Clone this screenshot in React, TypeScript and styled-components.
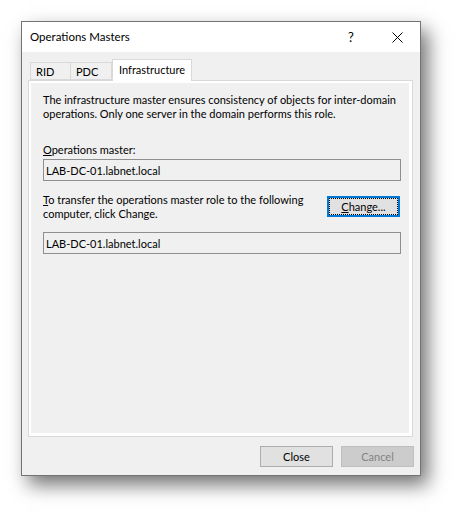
import React from 'react'
import styled, { createGlobalStyle } from 'styled-components'

const GlobalStyle = createGlobalStyle`
  html, body {
    margin: 0;
    padding: 0;
    background: #ffffff;
  }
  body {
    font-family: Lato, 'Liberation Sans', Arial, sans-serif;
    font-size: 11px;
    color: #000000;
  }
`

const Stage = styled.div`
  padding: 21px 0 0 21px;
  width: 463px;
  height: 518px;
  box-sizing: border-box;
`

const Window = styled.div`
  width: 400px;
  height: 455px;
  box-sizing: border-box;
  border: 1px solid #737373;
  background: #f0f0f0;
  display: flex;
  flex-direction: column;
  box-shadow: 7px 9px 18px rgba(0, 0, 0, 0.55);
`

const TitleBar = styled.div`
  height: 30px;
  background: #ffffff;
  display: flex;
  align-items: center;
  padding-left: 8px;
`

const Title = styled.div`
  flex: 1;
  font-size: 11.5px;
  margin-top: -1px;
`

const TitleButton = styled.div`
  width: 46px;
  height: 30px;
  display: flex;
  align-items: center;
  justify-content: center;
  font-size: 13px;
`

const Body = styled.div`
  flex: 1;
  display: flex;
  flex-direction: column;
  padding: 7px 7px 0 6px;
`

const TabStrip = styled.div`
  display: flex;
  align-items: flex-end;
  padding-left: 2px;
  height: 21px;
  position: relative;
  z-index: 1;
`

const Tab = styled.div<{ $active?: boolean }>`
  box-sizing: border-box;
  height: ${(p) => (p.$active ? '22px' : '18px')};
  margin-bottom: ${(p) => (p.$active ? '-1px' : '0')};
  padding: ${(p) => (p.$active ? '0 6px 3px 6px' : '0 5px 0 5px')};
  border: 1px solid #d9d9d9;
  border-bottom: ${(p) => (p.$active ? 'none' : '1px solid #d9d9d9')};
  border-left: ${(p) => (p.$active ? '1px solid #d9d9d9' : 'none')};
  &:first-child {
    border-left: 1px solid #d9d9d9;
  }
  background: ${(p) => (p.$active ? '#ffffff' : '#f0f0f0')};
  display: flex;
  align-items: center;
  font-size: 11px;
  min-width: ${(p) => (p.$active ? '0' : '41px')};
`

const Panel = styled.div`
  box-sizing: border-box;
  width: 385px;
  height: 357px;
  border: 1px solid #d9d9d9;
  background: #ffffff;
  padding: 2px;
  display: flex;
`

const Page = styled.div`
  flex: 1;
  min-width: 0;
  overflow: hidden;
  background: #f0f0f0;
  margin-right: 1px;
  margin-bottom: 1px;
  padding: 10px 8px 0 12px;
  display: flex;
  flex-direction: column;
`

const Paragraph = styled.p`
  margin: 0;
  line-height: 13.5px;
  white-space: nowrap;
`

const Label = styled.div`
  margin-top: 23px;
  line-height: 14px;
`

const TextBox = styled.div`
  box-sizing: border-box;
  height: 22px;
  border: 1px solid #8f8f8f;
  background: #f0f0f0;
  display: flex;
  align-items: center;
  padding-left: 2px;
  margin-top: 2px;
`

const TransferRow = styled.div`
  display: flex;
  align-items: flex-start;
  justify-content: space-between;
  margin-top: 12px;
  margin-bottom: 10px;
`

const TransferText = styled.div`
  line-height: 13.5px;
  white-space: nowrap;
`

const Button = styled.button<{ $focused?: boolean; $disabled?: boolean }>`
  box-sizing: border-box;
  width: 73px;
  height: 21px;
  font-family: inherit;
  font-size: 11px;
  border: ${(p) =>
    p.$focused
      ? '2px solid #0078d7'
      : p.$disabled
        ? '1px solid #bfbfbf'
        : '1px solid #adadad'};
  background: ${(p) => (p.$disabled ? '#cccccc' : '#e1e1e1')};
  color: ${(p) => (p.$disabled ? '#838383' : '#000000')};
  padding: 0;
  display: flex;
  align-items: center;
  justify-content: center;
  position: relative;
  ${(p) =>
    p.$focused
      ? `
    &::after {
      content: '';
      position: absolute;
      inset: 0px;
      border: 1px dotted #000000;
    }
  `
      : ''}
`

const ChangeButton = styled(Button)`
  margin-top: 3px;
  margin-right: 1px;
`

const Footer = styled.div`
  display: flex;
  justify-content: flex-end;
  gap: 8px;
  padding: 9px 0 0 0;
  margin-right: -1px;
`

const Accel = styled.span`
  text-decoration: underline;
  text-underline-offset: 1px;
`

function CloseGlyph() {
  return (
    <svg width="11" height="11" viewBox="0 0 11 11">
      <path d="M0.5 0.5 L10.5 10.5 M10.5 0.5 L0.5 10.5" stroke="#000" strokeWidth="1" fill="none" />
    </svg>
  )
}

export default function App() {
  return (
    <>
      <GlobalStyle />
      <Stage>
        <Window>
          <TitleBar>
            <Title>Operations Masters</Title>
            <TitleButton>?</TitleButton>
            <TitleButton>
              <CloseGlyph />
            </TitleButton>
          </TitleBar>
          <Body>
            <TabStrip>
              <Tab>RID</Tab>
              <Tab>PDC</Tab>
              <Tab $active>Infrastructure</Tab>
            </TabStrip>
            <Panel>
              <Page>
                <Paragraph>
                  The infrastructure master ensures consistency of objects for inter-domain
                  <br />
                  operations. Only one server in the domain performs this role.
                </Paragraph>
                <Label>
                  <Accel>O</Accel>perations master:
                </Label>
                <TextBox>LAB-DC-01.labnet.local</TextBox>
                <TransferRow>
                  <TransferText>
                    <Accel>T</Accel>o transfer the operations master role to the following
                    <br />
                    computer, click Change.
                  </TransferText>
                  <ChangeButton $focused>
                    <span>
                      <Accel>C</Accel>hange...
                    </span>
                  </ChangeButton>
                </TransferRow>
                <TextBox>LAB-DC-01.labnet.local</TextBox>
              </Page>
            </Panel>
            <Footer>
              <Button>Close</Button>
              <Button $disabled>Cancel</Button>
            </Footer>
          </Body>
        </Window>
      </Stage>
    </>
  )
}
